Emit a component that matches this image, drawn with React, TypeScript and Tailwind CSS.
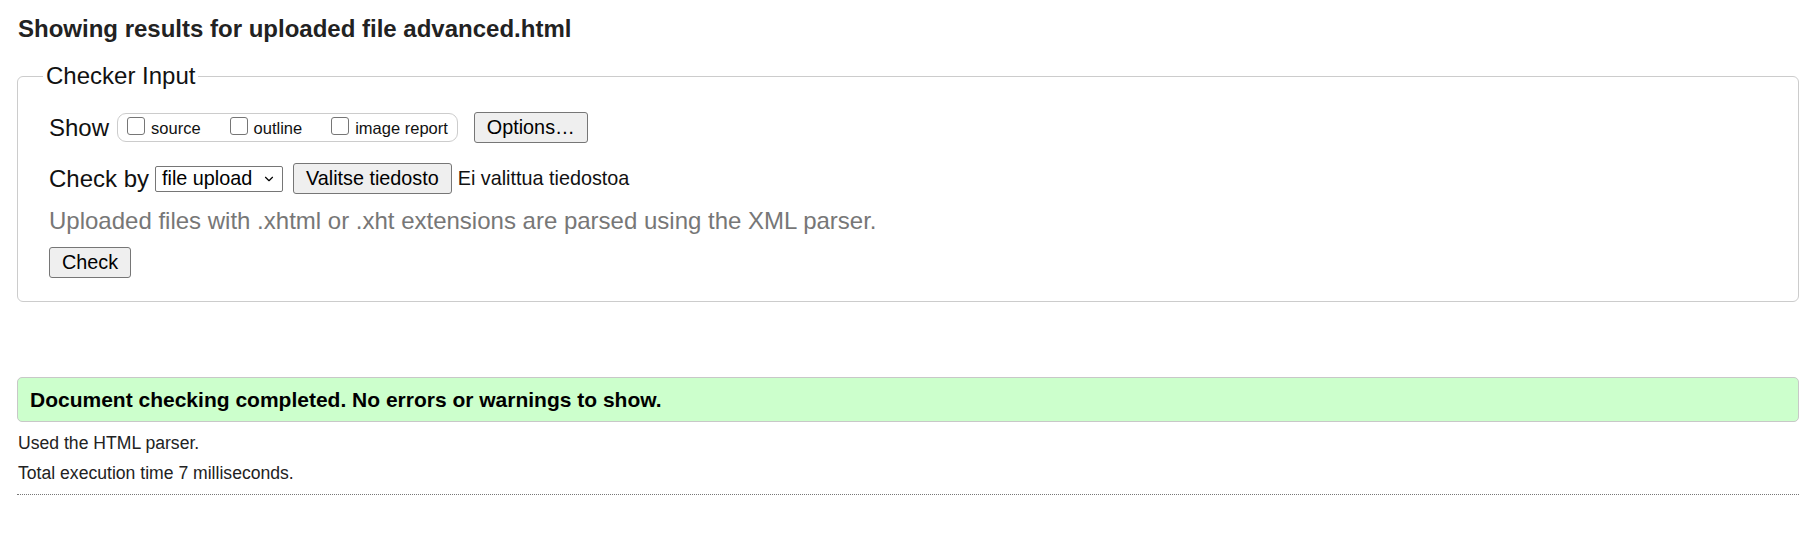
import { ChevronDown } from "lucide-react";

// checker input options
const SHOW_OPTIONS = ["source", "outline", "image report"];

function Box() {
  return (
    <span className="inline-block w-[18px] h-[18px] mr-[6px] rounded-[3px] border border-[#767676] bg-white align-[-1px]" />
  );
}

function Btn({ children }: { children: React.ReactNode }) {
  return (
    <span className="h-[31px] flex items-center px-[12px] bg-[#efefef] border border-[#767676] rounded-[3px] text-[19.8px] text-black">
      {children}
    </span>
  );
}

export default function App() {
  return (
    <div className="min-h-screen bg-white px-[17px] pt-[15px] font-['Liberation_Sans',Arial,sans-serif] text-[#222]">
      {/* header */}
      <h2 className="text-[24px] leading-[28px] font-bold text-[#222] pl-[1px]">
        Showing results for uploaded file advanced.html
      </h2>

      {/* form */}
      <fieldset className="mt-[19px] border border-[#ccc] rounded-[6px]">
        <legend className="ml-[25px] px-[3px] text-[24px] leading-[28px] text-[#111]">
          Checker Input
        </legend>
        <div className="pl-[31px] pt-[22px] pb-[23px] flex flex-col">
          <div className="h-[31px] flex items-center">
            <span className="text-[24px] leading-[28px] text-[#111]">Show</span>
            <div className="ml-[8px] h-[29px] flex items-center gap-[29px] px-[9px] border border-[#ccc] rounded-[9px]">
              {SHOW_OPTIONS.map((opt) => (
                <label key={opt} className="text-[16.5px] leading-[20px] text-[#111] whitespace-nowrap">
                  <Box />
                  {opt}
                </label>
              ))}
            </div>
            <div className="ml-[16px]">
              <Btn>Options…</Btn>
            </div>
          </div>

          <div className="mt-[20px] h-[31px] flex items-center">
            <span className="text-[24px] leading-[28px] text-[#111]">Check by</span>
            <div className="ml-[6px] w-[128px] h-[26px] flex items-center justify-between pl-[6px] pr-[6px] border border-[#767676] rounded-[2px] bg-white text-[19.8px] text-black">
              <span>file upload</span>
              <ChevronDown className="w-[14px] h-[14px]" strokeWidth={2} />
            </div>
            <div className="ml-[10px]">
              <Btn>Valitse tiedosto</Btn>
            </div>
            <span className="ml-[6px] text-[19.8px] text-[#111]">Ei valittua tiedostoa</span>
          </div>

          <p className="mt-[13px] text-[24px] leading-[28px] text-[#777]">
            Uploaded files with .xhtml or .xht extensions are parsed using the XML parser.
          </p>

          <div className="mt-[12px] flex">
            <Btn>Check</Btn>
          </div>
        </div>
      </fieldset>

      {/* results */}
      <div className="mt-[75px] h-[45px] flex items-center px-[12px] bg-[#ccffcc] border border-[#c8c8c8] rounded-[5px]">
        <span className="text-[21px] font-bold text-black">
          Document checking completed. No errors or warnings to show.
        </span>
      </div>
      <p className="mt-[11px] pl-[1px] text-[17.6px] leading-[20px] text-[#222]">Used the HTML parser.</p>
      <p className="mt-[10px] pl-[1px] text-[17.6px] leading-[20px] text-[#222]">Total execution time 7 milliseconds.</p>
      <div className="mt-[11px] border-t border-dotted border-[#777]" />
    </div>
  );
}
